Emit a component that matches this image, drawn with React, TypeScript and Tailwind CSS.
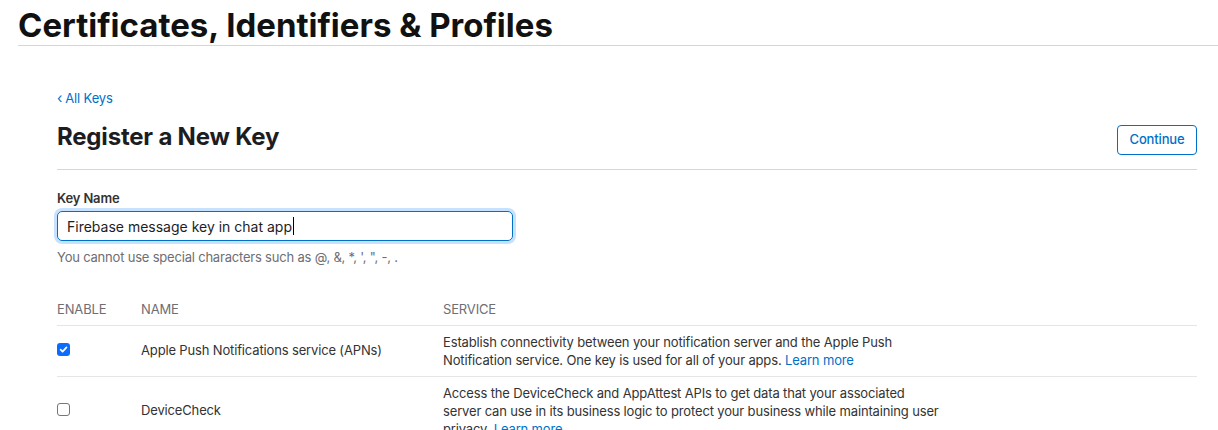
import React from 'react';

const services = [
  {
    name: 'Apple Push Notifications service (APNs)',
    enabled: true,
    text: 'Establish connectivity between your notification server and the Apple Push Notification service. One key is used for all of your apps.',
  },
  {
    name: 'DeviceCheck',
    enabled: false,
    text: 'Access the DeviceCheck and AppAttest APIs to get data that your associated server can use in its business logic to protect your business while maintaining user privacy.',
  },
];

function Checkbox({ checked }: { checked: boolean }) {
  if (checked) {
    return (
      <span className="flex h-[13px] w-[13px] items-center justify-center rounded-[3px] bg-[#0a6cff]">
        <svg width="9" height="9" viewBox="0 0 10 10" fill="none">
          <path d="M1.8 5.2 4 7.4 8.3 2.6" stroke="white" strokeWidth="1.8" strokeLinecap="round" strokeLinejoin="round" />
        </svg>
      </span>
    );
  }
  return <span className="block h-[13px] w-[13px] rounded-[3px] border border-[#767676] bg-white" />;
}

export default function App() {
  return (
    <div className="min-h-[430px] bg-white text-[#1d1d1f] [font-family:Inter,'Liberation_Sans',sans-serif]">
      {/* page header */}
      <div className="ml-[18px] border-b border-[#d6d6d6] pt-[6px] pb-[1px]">
        <h1 className="text-[33px] font-bold leading-[38px] text-[#111]">
          Certificates, Identifiers &amp; Profiles
        </h1>
      </div>

      <div className="pl-[57px] pr-[21px] pt-[43px] tracking-[-0.15px]">
        <a className="flex items-center gap-[3px] text-[13px] leading-[18px] text-[#0070c9]">
          <span className="text-[14px]">‹</span>
          <span>All Keys</span>
        </a>

        <div className="mt-[15px] flex items-end justify-between border-b border-[#d6d6d6] pb-[14px]">
          <h2 className="mb-[3px] text-[24px] font-bold leading-[30px] tracking-[-0.2px] text-[#1d1d1f]">Register a New Key</h2>
          <button className="h-[30px] w-[80px] rounded-[4px] border border-[#0070c9] text-[13px] font-medium text-[#0070c9]">
            Continue
          </button>
        </div>

        {/* key name */}
        <div className="pt-[20px]">
          <label className="block text-[13px] font-semibold leading-[16px] text-[#333]">Key Name</label>
          <div className="mt-[5px] w-[456px] rounded-[5px] border border-[#0070c9] shadow-[0_0_0_3px_rgba(0,125,250,0.22)]">
            <div className="flex h-[28px] items-center pl-[9px] text-[14px] tracking-normal text-[#1d1d1f]">
              Firebase message key in chat app
              <span className="ml-[1px] h-[18px] w-px bg-black" />
            </div>
          </div>
          <p className="mt-[8px] text-[13px] leading-[16px] tracking-[-0.2px] text-[#6e6e73]">
            You cannot use special characters such as @, &amp;, *, ', ", -, .
          </p>
        </div>

        {/* services table */}
        <div className="mt-[36px]">
          <div className="grid grid-cols-[84px_302px_1fr] border-b border-[#e5e5e5] pb-[8px] text-[13px] leading-[16px] text-[#6e6e73]">
            <span>ENABLE</span>
            <span>NAME</span>
            <span>SERVICE</span>
          </div>
          {services.map((s) => (
            <div key={s.name} className="grid grid-cols-[84px_302px_1fr] items-center border-b border-[#e5e5e5] py-[7px]">
              <div className="mb-[3px]">
                <Checkbox checked={s.enabled} />
              </div>
              <div className="text-[13px] text-[#333]">{s.name}</div>
              <p className="w-[500px] text-[13px] leading-[18px] text-[#333]">
                {s.text} <a className="text-[#0070c9]">Learn more</a>
              </p>
            </div>
          ))}
        </div>
      </div>
    </div>
  );
}
